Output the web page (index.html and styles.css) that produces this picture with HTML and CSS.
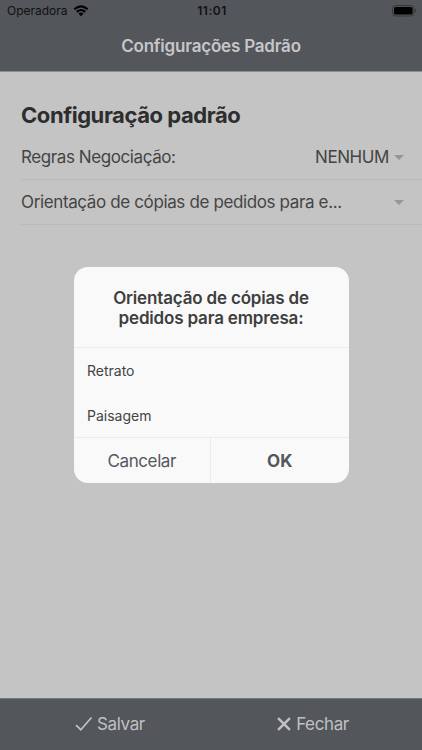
FILE: index.html
```html
<!DOCTYPE html>
<html lang="pt-BR">
<head>
<meta charset="utf-8">
<meta name="viewport" content="width=device-width, initial-scale=1">
<title>Configurações Padrão</title>
<link rel="stylesheet" href="styles.css">
</head>
<body>
<div class="app">
  <header class="header">
    <div class="status">
      <div class="carrier"><span class="carrier-name">Operadora</span>
        <svg class="wifi" width="16" height="12" viewBox="0 0 16 12"><path d="M1.3 4.3Q8-1.6 14.7 4.3M3.7 6.9Q8 3.1 12.3 6.9" fill="none" stroke="#000" stroke-width="2.1"/><path d="M5.4 8.5Q8 6.3 10.6 8.5L8 11.2Z"/></svg>
      </div>
      <span class="time">11:01</span>
      <svg class="battery" width="25" height="12" viewBox="0 0 25 12"><rect x=".6" y=".6" width="21.4" height="10.4" rx="3" fill="none" stroke="#35373a"/><rect x="2" y="2" width="18.6" height="7.6" rx="1.6"/><path d="M23 4v3.6q1.3-.5 1.3-1.8T23 4" fill="#35373a"/></svg>
    </div>
    <h1 class="title"><span>Configurações Padrão</span></h1>
  </header>
  <main class="content">
    <h2 class="heading"><span>Configuração padrão</span></h2>
    <div class="row"><span class="regras">Regras Negociação:</span><span class="value">NENHUM</span><i class="caret"></i></div>
    <div class="row"><span class="orient">Orientação de cópias de pedidos para e...</span><i class="caret"></i></div>
  </main>
  <footer class="footer">
    <div class="action save"><svg width="18" height="16" viewBox="0 0 18 16"><path d="M1 9.1 5.8 13.7 16.5 1.5" fill="none" stroke="#c0c1c3" stroke-width="1.7"/></svg><span>Salvar</span></div>
    <div class="action close"><svg width="14" height="14" viewBox="0 0 14 14"><path d="M1.1 1.1 12.9 12.9M12.9 1.1 1.1 12.9" fill="none" stroke="#c0c1c3" stroke-width="2.5"/></svg><span>Fechar</span></div>
  </footer>
  <section class="dialog" role="dialog">
    <h3 class="dialog-title"><span>Orientação de cópias de</span><br><span>pedidos para empresa:</span></h3>
    <div class="options">
      <div class="option"><span>Retrato</span></div>
      <div class="option"><span>Paisagem</span></div>
    </div>
    <div class="buttons"><div class="button"><span>Cancelar</span></div><div class="button ok"><span>OK</span></div></div>
  </section>
</div>
</body>
</html>
```
FILE: styles.css
```css
* { box-sizing: border-box; }
body { margin: 0; font-family: Inter, "Liberation Sans", sans-serif; color: #444; }
h1, h2, h3 { margin: 0; }
span { white-space: nowrap; }
.app { position: relative; height: 750px; display: flex; flex-direction: column; background: #c4c4c4; overflow: hidden; }
.header { height: 72px; background: #53565b; border-bottom: 1px solid #8d8c8e; }
.status { height: 21px; display: grid; grid-template-columns: 1fr auto 1fr; align-items: center; padding: 0 5px 0 7px; color: #111; font-size: 12px; }
.carrier { display: flex; align-items: center; gap: 5px; }
.time { font-weight: 600; letter-spacing: .55px; }
.battery { justify-self: end; }
.title { height: 50px; display: flex; align-items: center; justify-content: center; font-size: 17px; font-weight: 600; letter-spacing: -.2px; color: #c6c6c8; }
.content { flex: 1; padding: 21px 0 0 21px; }
.heading { height: 42px; line-height: 44px; font-size: 22px; font-weight: 700; letter-spacing: -.44px; color: #2d2d2e; }
.row { height: 45px; display: flex; align-items: center; border-bottom: 1px solid #bababa; font-size: 17px; letter-spacing: -.41px; padding-right: 18px; }
.value { margin-left: auto; }
.caret { width: 0; border: 5px solid transparent; border-top-color: #969696; border-bottom: 0; margin-left: 5px; }
.orient { letter-spacing: -.37px; }
.orient + .caret { margin-left: auto; }
.footer { height: 52px; display: grid; grid-template-columns: 1fr 1fr; background: #53565b; border-top: 1px solid #737578; }
.action { display: flex; align-items: center; justify-content: center; gap: 4px; padding-bottom: 2px; color: #c0c1c3; font-size: 17px; letter-spacing: -.38px; }
.save { padding-left: 9px; }
.close { gap: 5.5px; padding-right: 7.5px; }
.dialog { position: absolute; left: 73.5px; top: 267px; width: 275px; height: 216px; border-radius: 14px; overflow: hidden; background: #f9f9f9; }
.dialog-title { height: 81px; padding-top: 21px; text-align: center; font-size: 17px; line-height: 20px; font-weight: 600; letter-spacing: -.17px; color: #3f3f3f; border-bottom: 1px solid #ebebeb; }
.options { height: 90px; border-bottom: 1px solid #ebebeb; }
.option { height: 45px; display: flex; align-items: center; padding-left: 13.5px; font-size: 14px; }
.buttons { height: 45px; display: grid; grid-template-columns: 1fr 1fr; color: #55575d; font-size: 17px; letter-spacing: -.4px; }
.button { display: flex; align-items: center; justify-content: center; border-right: 1px solid #ebebeb; }
.ok { border: 0; font-weight: 700; letter-spacing: 0; }
```
